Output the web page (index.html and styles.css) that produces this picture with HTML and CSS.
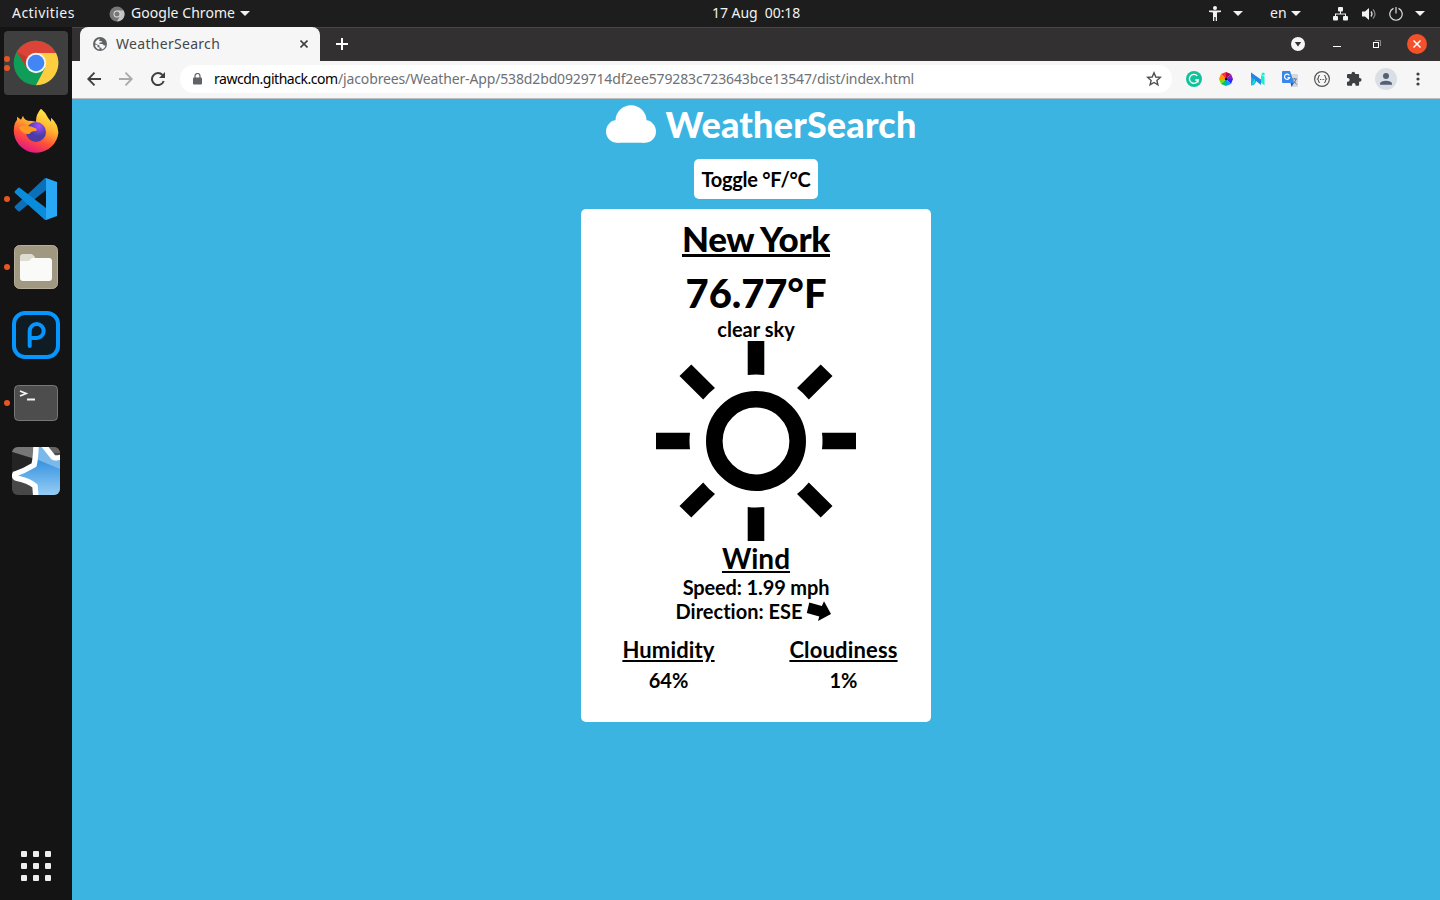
FILE: index.html
```html
<!DOCTYPE html>
<html lang="en">
<head>
<meta charset="utf-8">
<title>WeatherSearch</title>
<link rel="stylesheet" href="styles.css">
</head>
<body>
<header class="topbar">
  <div class="top-left">
    <span class="t-act">Activities</span>
    <svg class="t-logo" width="16" height="16" viewBox="0 0 16 16"><circle cx="8" cy="8" r="7.5" fill="#777"/><path d="M8 4.5H14.7A7.5 7.5 0 0 1 8 15.5L11 10Z" fill="#c4c4c4"/><circle cx="8" cy="8" r="3.5" fill="#ddd"/><circle cx="8" cy="8" r="2.5" fill="#777"/></svg>
    <span class="t-app">Google Chrome</span>
    <i class="caret"></i>
  </div>
  <div class="t-clock">17 Aug&nbsp; 00:18</div>
  <div class="top-right">
    <svg width="12" height="15" viewBox="0 0 12 15" fill="#f2f2f2"><circle cx="6" cy="2" r="2"/><path d="M0 4.5h12v1.4L8 6.6V15H6.7v-4H5.3v4H4V6.6L0 5.9Z"/></svg>
    <i class="caret c1"></i>
    <span class="t-lang">en</span>
    <i class="caret c2"></i>
    <svg class="net" width="15" height="14" viewBox="0 0 15 14" fill="#f2f2f2"><rect x="5" y="0" width="5" height="4.5" rx="1"/><rect x="0" y="9" width="5" height="4.5" rx="1"/><rect x="10" y="9" width="5" height="4.5" rx="1"/><path d="M7 4h1v2.5h5V9h-1V7.5H3V9H2V6.500h5Z"/></svg>
    <svg class="vol" width="15" height="14" viewBox="0 0 15 14" fill="none"><path d="M0 4.500h3L7 1v12L3 9.500H0Z" fill="#f2f2f2"/><path d="M9 4.500q2 2.500 0 5" stroke="#ddd" stroke-width="1.300"/><path d="M11 2.500q4 4.500 0 9" stroke="#888" stroke-width="1.200"/></svg>
    <svg class="pow" width="14" height="14" viewBox="0 0 14 14" fill="none" stroke="#dedede" stroke-width="1.200"><path d="M4.500 1.400a6.200 6.200 0 1 0 5 0M7 0v6.500"/></svg>
    <i class="caret c3"></i>
  </div>
</header>
<div class="desk">
  <nav class="dock">
    <div class="tile active"><div class="dots"><i></i><i></i></div>
      <svg width="48" height="48" viewBox="-24 -24 48 48"><circle r="22.300" fill="#109d58"/><path d="M-19.300 -11.200A22.300 22.300 0 0 1 20 -10H0L-9 5Z" fill="#db4437"/><path d="M0 -10H20A22.300 22.300 0 0 1 0 22.300L9 5Z" fill="#ffcd40"/><path d="M-19.300 -11.200L-9 5L-7 -5Z" fill="#c23a2e"/><circle r="10.200" fill="#f1f1f1"/><circle r="8.300" fill="#4285f4"/></svg></div>
    <div class="tile">
      <svg width="48" height="48" viewBox="0 0 48 48"><defs><linearGradient id="ff" x1=".8" y1="0" x2=".35" y2="1"><stop offset="0" stop-color="#fff44f"/><stop offset=".4" stop-color="#ffb22e"/><stop offset=".7" stop-color="#ff5038"/><stop offset="1" stop-color="#e31587"/></linearGradient><radialGradient id="fp" cx=".65" cy=".2"><stop offset="0" stop-color="#a050ff"/><stop offset="1" stop-color="#4b3ca8"/></radialGradient></defs><path d="M29 1q4 3 7 9l3 4V10q7 6 7.400 15A22.400 22.400 0 0 1 2 26Q1 17 5 12v-3l4 3 2-4q1 4 5 5 4 0 8 1 0-8 5-13Z" transform="translate(0 .8)" fill="url(#ff)"/><circle cx="24" cy="25" r="10" fill="url(#fp)"/><path d="M7 20q9-3 17 1.500q2 2-1 2.500-4 0-5 2.500-5 2-10-4Z" fill="#ff9825"/></svg></div>
    <div class="tile"><div class="dots"><i></i></div>
      <svg width="48" height="48" viewBox="0 0 48 48"><path d="M34 3v12L8 36q-1 1-2 0l-3-3q-1-1 0-2L33 3Z" fill="#0b70b8"/><path d="M34 45v-12L8 13q-1-1-2 0l-3 3q-1 1 0 2L33 45Z" fill="#0b8bdc"/><path d="M34 3l11 4v34l-11 4Z" fill="#28a8f5"/></svg></div>
    <div class="tile"><div class="dots"><i></i></div>
      <svg width="48" height="48" viewBox="0 0 48 48"><rect x="2.500" y="2.500" width="43" height="43" rx="5" fill="#a09880" stroke="#b6ae9a"/><path d="M8 14q0-3 3-3h9l3 3v8H8Z" fill="#dedbd0"/><path d="M8 18h8q1 0 2-1l2-2h17q3 0 3 3v17q0 3-3 3H11q-3 0-3-3Z" fill="#fafaf8"/></svg></div>
    <div class="tile">
      <svg width="48" height="48" viewBox="0 0 48 48" fill="none" stroke="#0696ff"><rect x="2" y="2" width="44" height="44" rx="11" fill="#101c24" stroke-width="4"/><path d="M17.700 35V20a7 7 0 1 1 7 7h-7" stroke-width="4" stroke-linecap="round"/></svg></div>
    <div class="tile"><div class="dots"><i></i></div>
      <svg width="48" height="48" viewBox="0 0 48 48"><rect x="2.500" y="6.500" width="43" height="35" rx="4" fill="#4d4d4d" stroke="#777"/><path d="M8 12l6 2.500L8 17M15 20.500h8" fill="none" stroke="#f4f4f4" stroke-width="1.800"/></svg></div>
    <div class="tile">
      <svg width="48" height="48" viewBox="0 0 48 48"><defs><clipPath id="an"><rect width="48" height="48" rx="6"/></clipPath><linearGradient id="ab" x1="0" y1="0" x2="0" y2="1"><stop offset="0.2" stop-color="#2487dc"/><stop offset="1" stop-color="#a0d4f7"/></linearGradient></defs><g clip-path="url(#an)"><path d="M0 0h48v48H0Z" fill="#484848"/><path d="M0 0h24v12L0 5Z" fill="#777"/><path d="M0 5l22 7v8L0 28Z" fill="#242424"/><path d="M23-4L22 18L2 29L23 38L24 52H60V10L43 11L29 -5Z" fill="url(#ab)"/><path d="M24 0h8l12 14h4v8L24 12Z" fill="#7cb9eb"/><path d="M35-2l6 8h9v-8Z" fill="#666"/><path d="M24-4Q24 10 22 18Q12 24 3 27Q2 30 4 31Q18 34 23 39L24 52M30-4L41 10Q43 12 50 10" fill="none" stroke="#fff" stroke-width="5.500"/></g></svg></div>
    <svg class="apps" width="30" height="30" viewBox="0 0 30 30" fill="#eee"><rect width="6" height="6" rx="1"/><rect x="12" width="6" height="6" rx="1"/><rect x="24" width="6" height="6" rx="1"/><rect y="12" width="6" height="6" rx="1"/><rect x="12" y="12" width="6" height="6" rx="1"/><rect x="24" y="12" width="6" height="6" rx="1"/><rect y="24" width="6" height="6" rx="1"/><rect x="12" y="24" width="6" height="6" rx="1"/><rect x="24" y="24" width="6" height="6" rx="1"/></svg>
  </nav>
  <section class="window">
    <div class="tabs">
      <div class="tab">
        <svg width="14" height="14" viewBox="0 0 14 14"><circle cx="7" cy="7" r="7" fill="#5f6368"/><path d="M7 1.700q-1 1-.8 2.300h2.500v1.500H6.500v1.500h3l1.500 1.500h1.500q-.8 3.500-4 4V11L6.500 10V8.500L2 6.300Q3 2.300 7 1.700Z" fill="#f6f6f6"/><path d="M2 7.800h2.500v2.500h2v2.300Q2.500 12 2 7.800Z" fill="#f6f6f6"/></svg>
        <span class="tab-title">WeatherSearch</span>
        <svg class="x" width="8" height="8" viewBox="0 0 8 8" stroke="#3c4043" stroke-width="1.600"><path d="M.5.5l7 7m0-7l-7 7"/></svg>
      </div>
      <svg class="plus" width="12" height="12" viewBox="0 0 12 12" stroke="#fff" stroke-width="2"><path d="M6 0v12M0 6h12"/></svg>
      <div class="winctl">
        <svg width="14" height="14" viewBox="0 0 14 14"><circle cx="7" cy="7" r="7" fill="#f6f6f6"/><path d="M3.800 5h6.400L7 9.500Z" fill="#333"/></svg>
        <i class="min"></i>
        <svg class="max" width="8" height="8" viewBox="0 0 8 8" fill="none"><path d="M2 .5h5.500V6" stroke="#8a8a8a"/><rect x=".5" y="2.500" width="5" height="5" stroke="#fff"/></svg>
        <svg class="close" width="20" height="20" viewBox="0 0 20 20"><circle cx="10" cy="10" r="10" fill="#f4502a"/><path d="M6.500 6.500l7 7m0-7l-7 7" stroke="#fff" stroke-width="1.500"/></svg>
      </div>
    </div>
    <div class="toolbar">
      <svg width="14" height="14" viewBox="0 0 14 14" fill="none" stroke="#3c4043" stroke-width="1.900"><path d="M14 7H1.500M7.500.7L1.300 7l6.200 6.300"/></svg>
      <svg class="fwd" width="14" height="14" viewBox="0 0 14 14" fill="none" stroke="#aaa" stroke-width="1.900"><path d="M0 7h12.500M6.500.7L12.700 7l-6.200 6.300"/></svg>
      <svg class="rel" width="14" height="14" viewBox="0 0 14 14"><path d="M11.600 3.200A6 6 0 1 0 12.700 9" fill="none" stroke="#3c4043" stroke-width="2"/><path d="M14 0v6H8Z" fill="#3c4043"/></svg>
      <div class="omni">
        <svg width="9" height="12" viewBox="0 0 9 12"><rect y="4.500" width="9" height="7" rx="1" fill="#5f6368"/><path d="M2 5V3a2.500 2.500 0 0 1 5 0v2" fill="none" stroke="#5f6368" stroke-width="1.200"/></svg>
        <span class="host">rawcdn.githack.com</span><span class="path">/jacobrees/Weather-App/538d2bd0929714df2ee579283c723643bce13547/dist/index.html</span>
        <svg class="star" width="16" height="16" viewBox="0 0 16 16" fill="none" stroke="#4b4f53" stroke-width="1.400"><path d="M8 1.800l1.800 4.200 4.500.4-3.400 3 1 4.500L8 11.500l-3.900 2.400 1-4.500-3.400-3 4.500-.4Z"/></svg>
      </div>
      <div class="ext">
        <svg width="16" height="16" viewBox="0 0 16 16"><circle cx="8" cy="8" r="8" fill="#11c39a"/><path d="M11.300 4.800A4.500 4.500 0 1 0 12.300 9H9.300M12 8.500v3" fill="none" stroke="#fff" stroke-width="1.300"/></svg>
        <svg width="16" height="16" viewBox="-8 -8 16 16"><path d="M0 0V-7L5-5Z" fill="#c00040"/><path d="M0 0L0-7L-5-5Z" fill="#f33"/><path d="M0 0L5-5L7 0Z" fill="#7d20cf"/><path d="M0 0L7 0L5 5Z" fill="#3421ff"/><path d="M0 0L5 5L0 7Z" fill="#00a6e8"/><path d="M0 0L0 7L-5 5Z" fill="#00c463"/><path d="M0 0L-5 5L-7 0Z" fill="#7fe000"/><path d="M0 0L-7 0L-5-5Z" fill="#ff9400"/><circle r="1.200" fill="#111"/></svg>
        <svg width="16" height="16" viewBox="0 0 16 16"><path d="M1 1.500l5 4.500v5l-2 3-3 .5Z" fill="#24a8ec"/><path d="M1 1.500l10 7v5.500L1 6Z" fill="#2486e4"/><path d="M1 14.500l4-7v4.500Z" fill="#18dfd7"/><path d="M11 4l3.500 1.500v9l-3.500-3Z" fill="#1cf0ca"/><circle cx="13.200" cy="3" r="1.600" fill="#1cf0ca"/></svg>
        <svg width="16" height="16" viewBox="0 0 16 16"><path d="M6 3h9q1 0 1 1v11q0 1-1 1h-5Z" fill="#d5d8dc"/><path d="M1 0h7l4 12H1q-1 0-1-1V1q0-1 1-1Z" fill="#3887ee"/><path d="M7.300 4.300A2.600 2.600 0 1 0 7.600 6.500H5.500" fill="none" stroke="#fff" stroke-width="1.200"/><path d="M8.500 12h3.500L9.500 16Z" fill="#2459b8"/><path d="M10 8h5M12.500 7v1M14 8q-1 4-3.500 5M11.500 9.500l3 4" stroke="#607d9b" fill="none"/></svg>
        <svg width="16" height="16" viewBox="0 0 16 16" fill="none" stroke="#555"><circle cx="8" cy="8" r="7.400" stroke-width="1.200"/><path d="M6 4.500q-1.500 0-1.500 1.500T3.500 8q1 .5 1 2T6 11.500M10 4.500q1.500 0 1.500 1.500t1 2q-1 .5-1 2T10 11.500M6 8.500h1M7.700 8.500h.8M9.200 8.500h1" stroke-width="1.100"/></svg>
        <svg width="16" height="16" viewBox="0 0 16 16" fill="#3c4043"><path d="M1 4q0-1 1-1h3.500V2.500a1.800 1.800 0 0 1 3.600 0V3h3q1 0 1 1v3h.6a1.800 1.800 0 0 1 0 3.700h-.6v3q0 1-1 1H9.500v-1a1.700 1.700 0 0 0-3.500 0v1H2q-1 0-1-1v-3h.8a1.800 1.800 0 0 0 0-3.700H1Z"/></svg>
        <svg class="ava" width="22" height="22" viewBox="0 0 22 22"><circle cx="11" cy="11" r="11" fill="#dadfe5"/><circle cx="11" cy="8" r="3" fill="#526173"/><path d="M5 16.700v-1.500Q6 12.700 11 12.700t6 2.500v1.500Z" fill="#526173"/></svg>
        <svg class="more" width="4" height="14" viewBox="0 0 4 14" fill="#3c4043"><circle cx="2" cy="2" r="1.600"/><circle cx="2" cy="7" r="1.600"/><circle cx="2" cy="12" r="1.600"/></svg>
      </div>
    </div>
    <main class="page">
      <div class="brand">
        <svg width="50" height="38" viewBox="0 0 50 38" fill="#fff"><circle cx="25" cy="15.700" r="15.500"/><circle cx="11.300" cy="26.400" r="11.300"/><circle cx="38.700" cy="26.400" r="11.300"/><rect x="11" y="15.500" width="28" height="22.200"/></svg>
        <h1>WeatherSearch</h1>
      </div>
      <button class="toggle">Toggle °F/°C</button>
      <article class="card">
        <h2 class="city">New York</h2>
        <p class="temp">76.77°F</p>
        <p>clear sky</p>
        <svg class="sun" width="200" height="200" viewBox="-100 -100 200 200"><circle r="41.700" fill="none" stroke="#000" stroke-width="16.600"/><path d="M-8.300-100H8.300V-66Q0-67-8.300-66ZM-8.300 100H8.300V66Q0 67-8.300 66ZM-100-8.300V8.300H-66Q-67 0-66-8.300ZM100-8.300V8.300H66Q67 0 66-8.300Z"/><path d="M-64.700-76.500L-41-53Q-47.500-48-52.800-41.500L-76.500-65ZM64.700-76.500L41-53Q47.500-48 52.800-41.500L76.500-65ZM-64.700 76.500L-41 53Q-47.500 48-52.800 41.500L-76.500 65ZM64.700 76.500L41 53Q47.500 48 52.800 41.500L76.500 65Z"/></svg>
        <h3 class="wind">Wind</h3>
        <p class="speed">Speed: 1.99 mph</p>
        <p class="dir"><span>Direction: ESE</span><svg width="25" height="22" viewBox="0 0 25 22"><path d="M3.300 2.500L15.800 6L18 1.300L25 14L12 21L13.300 16.500L.8 13Z"/></svg></p>
        <div class="stats">
          <div><h4>Humidity</h4><p>64%</p></div>
          <div><h4>Cloudiness</h4><p>1%</p></div>
        </div>
      </article>
    </main>
  </section>
</div>
</body>
</html>
```
FILE: styles.css
```css
* { box-sizing: border-box; margin: 0; padding: 0; }
html, body { height: 100%; }
body { display: flex; flex-direction: column; overflow: hidden; background: #141414; font-family: "Noto Sans", "Open Sans", sans-serif; }
svg, i { display: block; flex: none; }
span { white-space: nowrap; }
.topbar { height: 27px; flex: none; display: grid; grid-template-columns: 640px auto 1fr; align-items: center; background: #1d1d1d; color: #f2f2f2; font-size: 14px; line-height: 24px; }
.t-act, .t-app, .t-clock, .t-lang { padding-bottom: 2px; }
.top-left { display: flex; align-items: center; padding-left: 12px; }
.t-act { width: 97px; letter-spacing: .45px; }
.t-app { width: 109px; margin-left: 6px; letter-spacing: .05px; }
.caret { width: 0; border: 5px solid transparent; border-top-color: #f2f2f2; border-bottom: 0; }
.t-clock { width: 88px; margin-left: 72px; letter-spacing: -.05px; white-space: nowrap; }
.top-right { display: flex; align-items: center; justify-content: flex-end; padding-right: 15px; }
.c1 { margin-left: 12px; }
.t-lang { width: 17px; margin-left: 27px; }
.c2 { margin-left: 4px; }
.net { margin-left: 32px; }
.vol { margin-left: 14px; }
.pow { margin-left: 12px; }
.c3 { margin-left: 12px; }
.desk { flex: 1; display: flex; min-height: 0; }
.dock { width: 72px; flex: none; display: flex; flex-direction: column; align-items: center; gap: 4px; padding: 4px 0 19px; background: #141414; }
.tile { width: 64px; height: 64px; display: grid; place-items: center; position: relative; border-radius: 4px; }
.tile.active { background: #3f3f3f; }
.dots { position: absolute; left: 0; top: 0; height: 64px; display: flex; flex-direction: column; justify-content: center; gap: 3px; }
.dots i { width: 6px; height: 6px; border-radius: 50%; background: #e95420; }
.apps { margin-top: auto; }
.window { flex: 1; display: flex; flex-direction: column; min-width: 0; }
.tabs { height: 34px; flex: none; display: flex; align-items: center; padding: 0 0 1px 8px; background: #323031; border-top: 1px solid #474747; }
.tab { width: 240px; height: 34px; padding: 0 12px 0 13px; display: flex; align-items: center; background: #f6f6f6; border-radius: 8px 8px 0 0; }
.tab-title { margin-left: 9px; color: #45484b; font-size: 14px; line-height: 18px; letter-spacing: .3px; }
.x { margin-left: auto; }
.plus { margin-left: 16px; }
.winctl { margin-left: auto; display: flex; align-items: center; padding-right: 13px; }
.min { width: 8px; height: 1px; background: #fff; margin: 5px 0 0 28px; }
.max { margin-left: 32px; }
.close { margin-left: 26px; }
.toolbar { height: 38px; flex: none; display: flex; align-items: center; padding: 0 20px 1px 15px; background: #f6f6f6; border-bottom: 1px solid #bdbdbd; }
.fwd { margin-left: 18px; }
.rel { margin-left: 18px; }
.omni { width: 992px; height: 28px; margin-left: 15px; padding: 0 10px 0 13px; display: flex; align-items: center; background: #fff; border-radius: 14px; font-size: 14px; line-height: 18px; }
.host { width: 124px; margin-left: 12px; color: #000; letter-spacing: -.47px; }
.path { color: #6d7175; letter-spacing: -.14px; }
.star { margin-left: auto; }
.ext { display: flex; align-items: center; gap: 16px; margin-left: 14px; }
.ava { margin: 0 -3px; }
.more { margin: 0 -3px 0 6px; }
.page { flex: 1; background: #3cb4e1; display: flex; flex-direction: column; align-items: center; font-family: Lato, sans-serif; font-weight: 700; color: #000; font-size: 20px; line-height: 24px; font-variant-ligatures: none; }
.brand { height: 60px; display: flex; align-items: flex-start; gap: 10px; padding: 6px 0 0 10px; color: #fff; }
h1 { font-size: 36px; line-height: 38px; font-weight: 900; letter-spacing: .18px; }
.toggle { width: 124px; height: 40px; flex: none; border: 0; border-radius: 5px; background: #fff; font: 700 20px/40px Lato, sans-serif; letter-spacing: -.25px; color: #000; white-space: nowrap; }
.card { width: 350px; height: 513px; flex: none; margin-top: 10px; padding-top: 8px; border-radius: 5px; background: #fff; display: flex; flex-direction: column; align-items: center; }
.city { font-size: 35px; line-height: 42px; font-weight: 900; letter-spacing: -.38px; text-decoration: underline; }
.temp { margin-top: 10px; font-size: 40px; line-height: 48px; font-weight: 900; letter-spacing: -.1px; }
.wind { font-size: 28px; line-height: 34px; text-decoration: underline; }
.speed { letter-spacing: -.13px; }
.dir { display: flex; align-items: center; gap: 4px; margin-right: 5px; }
.stats { align-self: stretch; display: grid; grid-template-columns: 1fr 1fr; text-align: center; margin-top: 14px; }
h4 { font-size: 22px; line-height: 26px; margin-bottom: 5px; letter-spacing: .15px; text-decoration: underline; }
```
